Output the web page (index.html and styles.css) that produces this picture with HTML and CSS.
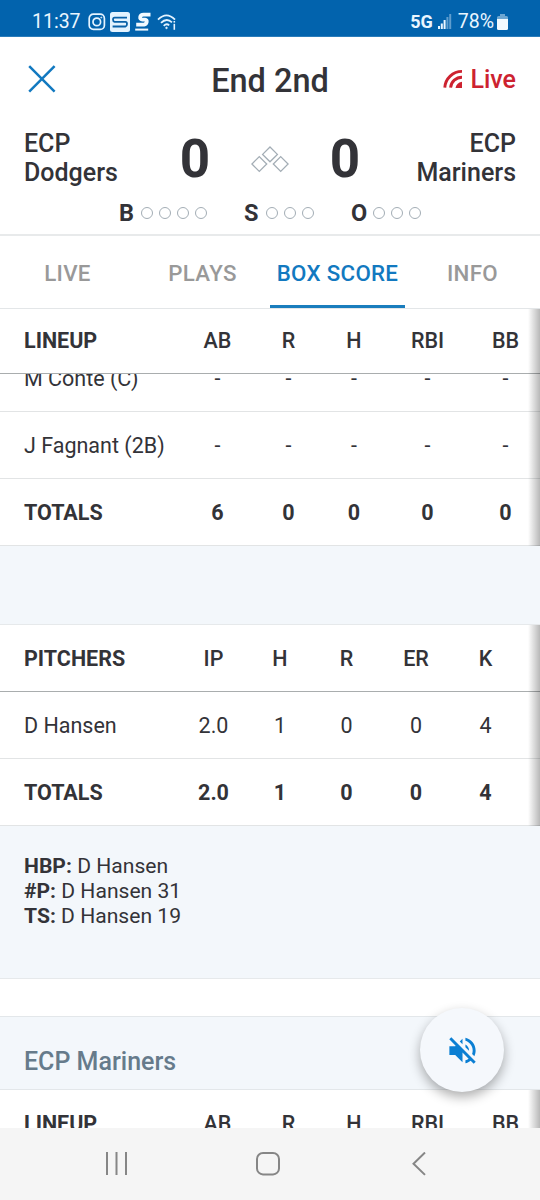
FILE: index.html
```html
<!DOCTYPE html>
<html lang="en">
<head>
    <meta charset="UTF-8">
    <meta name="viewport" content="width=device-width, initial-scale=1.0">
    <title>Box Score</title>
    <link rel="stylesheet" href="styles.css">
</head>
<body>
    <div class="status-bar">
        <span class="time">11:37</span>
        <svg class="app-icon" width="18" height="18" viewBox="0 0 18 18" fill="none" stroke="#e4f3ff" stroke-width="1.7">
            <rect x="1.2" y="1.2" width="15.2" height="15.2" rx="4.2"/>
            <circle cx="8.8" cy="8.9" r="3.8"/>
            <circle cx="13.3" cy="4.5" r=".6" fill="#e4f3ff" stroke-width=".6"/>
        </svg>
        <svg class="app-icon" width="20" height="20" viewBox="0 0 20 20">
            <rect width="20" height="20" rx="2.5" fill="#e4f3ff"/>
            <path d="M17 5.6H4.6Q3 5.6 3 7.6T4.6 9.8H15.4Q17 9.8 17 12T15.4 14.5H2.6" fill="none" stroke="#0a61a8" stroke-width="1.8"/>
        </svg>
        <svg class="app-icon" width="18" height="19" viewBox="0 0 18 19" fill="none" stroke="#f2faff">
            <path d="M16.5 2.6H9.6Q6.6 2.6 6.2 5T8.5 7.6H11Q13.2 7.8 12.7 10T10 12.6H2.2" stroke-width="3.8"/>
            <path d="M1.2 17.6H14.2" stroke-width="2"/>
        </svg>
        <svg class="app-icon" width="20" height="18" viewBox="0 0 20 18" fill="none" stroke="#e4f3ff" stroke-width="1.8">
            <path d="M1 6.6Q9.5-2 18 6.6M4 9.9Q9.5 4.3 15 9.3M6.7 12.9Q9.5 10 12.2 12.4"/>
            <circle cx="9.5" cy="14.9" r=".8" fill="#e4f3ff" stroke-width=".8"/>
            <path d="M17.3 10.8V16.8" stroke-width="1.6"/>
            <path d="M17.3 8V9.6" stroke-width="1.6"/>
        </svg>
        <span class="network">5G</span>
        <svg class="signal" width="14" height="15" viewBox="0 0 14 15" fill="#eaf6ff">
            <rect x="0" y="12" width="2" height="3"/>
            <rect x="2.8" y="9.5" width="2" height="5.5"/>
            <rect x="5.6" y="6" width="2" height="9"/>
            <rect x="8.4" y="3" width="2" height="12" opacity=".4"/>
            <rect x="11.2" y="0" width="2" height="15" opacity=".4"/>
        </svg>
        <span class="battery-level">78%</span>
        <svg class="battery" width="11" height="16" viewBox="0 0 11 16" fill="#f2faff">
            <path d="M3 0H8V2H9.5Q11 2 11 3.5V5H0V3.5Q0 2 1.5 2H3Z" opacity=".45"/>
            <path d="M0 5H11V14.5Q11 16 9.5 16H1.5Q0 16 0 14.5Z"/>
        </svg>
    </div>

    <header class="top-bar">
        <svg class="close" width="28" height="28" viewBox="0 0 28 28" stroke="#1279c0" stroke-width="2.5">
            <path d="M1.2 1.2L26.6 26.6M26.6 1.2L1.2 26.6"/>
        </svg>
        <h1>End 2nd</h1>
        <div class="live">
            <svg width="20" height="20" viewBox="0 0 20 20" fill="none" stroke="#cd2230" stroke-width="2.9">
                <path d="M1.8 18.6A17.2 17.2 0 0 1 19 2.4M7.6 18.6A11.4 11.4 0 0 1 19 8.2"/>
                <path d="M12.5 19Q13.2 14 19 12.8V19Z" fill="#cd2230" stroke="none"/>
            </svg>
            <span>Live</span>
        </div>
    </header>

    <section class="scoreboard">
        <div class="teams">
            <div class="team">ECP<br>Dodgers</div>
            <div class="score">0</div>
            <svg class="bases" width="38" height="28" viewBox="0 0 38 28" fill="none" stroke="#a3adb5" stroke-width="1.3">
                <path d="M19 1L26.4 8.4L19 15.8L11.6 8.4Z"/>
                <path d="M8.3 10.6L15.7 18L8.3 25.4L.9 18Z"/>
                <path d="M29.7 10.6L37.1 18L29.7 25.4L22.3 18Z"/>
            </svg>
            <div class="score">0</div>
            <div class="team away">ECP<br>Mariners</div>
        </div>
        <div class="counts">
            <div class="count"><b>B</b><i></i><i></i><i></i><i></i></div>
            <div class="count"><b>S</b><i></i><i></i><i></i></div>
            <div class="count"><b>O</b><i></i><i></i><i></i></div>
        </div>
    </section>

    <nav class="tabs">
        <span>LIVE</span>
        <span>PLAYS</span>
        <span class="active">BOX SCORE</span>
        <span>INFO</span>
    </nav>

    <main>
        <div class="stats lineup">
            <div class="row head"><b>LINEUP</b><span>AB</span><span>R</span><span>H</span><span>RBI</span><span>BB</span></div>
            <div class="scrolled">
                <div class="row"><span>M Conte (C)</span><span>-</span><span>-</span><span>-</span><span>-</span><span>-</span></div>
            </div>
            <div class="row"><span>J Fagnant (2B)</span><span>-</span><span>-</span><span>-</span><span>-</span><span>-</span></div>
            <div class="row totals"><span>TOTALS</span><span>6</span><span>0</span><span>0</span><span>0</span><span>0</span></div>
        </div>

        <div class="spacer"></div>

        <div class="stats pitchers">
            <div class="row head"><b>PITCHERS</b><span>IP</span><span>H</span><span>R</span><span>ER</span><span>K</span></div>
            <div class="row"><span>D Hansen</span><span>2.0</span><span>1</span><span>0</span><span>0</span><span>4</span></div>
            <div class="row totals"><span>TOTALS</span><span>2.0</span><span>1</span><span>0</span><span>0</span><span>4</span></div>
        </div>

        <div class="notes">
            <div><b>HBP:</b> D Hansen</div>
            <div><b>#P:</b> D Hansen 31</div>
            <div><b>TS:</b> D Hansen 19</div>
        </div>

        <h2>ECP Mariners</h2>

        <div class="stats lineup next">
            <div class="row head"><b>LINEUP</b><span>AB</span><span>R</span><span>H</span><span>RBI</span><span>BB</span></div>
        </div>
    </main>

    <button class="mute" aria-label="Unmute">
        <svg width="35" height="35" viewBox="0 0 24 24" fill="#0b7fd3">
            <path d="M4.34 2.93L2.93 4.34 7.29 8.7 7 9H3v6h4l5 5v-6.59l4.18 4.18c-.65.49-1.38.88-2.18 1.11v2.06c1.34-.3 2.57-.92 3.61-1.75l2.05 2.05 1.41-1.41L4.34 2.93zM19 12c0 .82-.15 1.61-.41 2.34l1.53 1.53c.56-1.17.88-2.48.88-3.87 0-4.28-2.99-7.86-7-8.77v2.06c2.89.86 5 3.54 5 6.71zm-7-8l-1.88 1.88L12 7.76zm4.5 8c0-1.77-1.02-3.29-2.5-4.03v1.79l2.48 2.48c.01-.08.02-.16.02-.24z"/>
        </svg>
    </button>

    <footer class="nav-bar">
        <svg width="24" height="24" viewBox="0 0 24 24" stroke="#868686" stroke-width="2">
            <path d="M2 0V23M11.5 0V23M21 0V23"/>
        </svg>
        <svg width="24" height="24" viewBox="0 0 24 24" fill="none" stroke="#868686" stroke-width="2">
            <rect x="1" y="1" width="22" height="21.4" rx="6"/>
        </svg>
        <svg width="24" height="24" viewBox="0 0 24 24" fill="none" stroke="#868686" stroke-width="2">
            <path d="M18 .5L6.5 11.7L18 22.9"/>
        </svg>
    </footer>
</body>
</html>
```
FILE: styles.css
```css
* { box-sizing: border-box; }
body { margin: 0; height: 1200px; display: flex; flex-direction: column; position: relative; overflow: hidden; background: #fff; color: #333338; font-family: Roboto, sans-serif; font-size: 21.5px; }

.status-bar { height: 37px; flex: none; padding: 7px 32px 0 32px; display: flex; align-items: center; background: #0263ad; border-bottom: 1px solid #2a7cba; color: #eaf6ff; font-size: 19.5px; }
.time { width: 48px; margin-right: 8px; }
.app-icon { margin-right: 4px; }
.app-icon:nth-of-type(3) { margin-right: 5px; }
.network { margin-left: auto; font-weight: 700; font-size: 18px; }
.signal { margin: 0 6px 0 5px; }
.battery { margin-left: 3px; }

.top-bar { height: 84px; flex: none; padding: 0 24px 0 28px; display: grid; grid-template-columns: 1fr auto 1fr; align-items: center; }
h1 { margin: 3px 4px 0 0; font-size: 32.5px; font-weight: 500; line-height: 38px; }
.live { display: flex; justify-content: flex-end; align-items: center; gap: 7px; color: #cd2230; font-size: 25px; font-weight: 500; }

.scoreboard { height: 115px; flex: none; border-bottom: 2px solid #e8eaeb; }
.teams { height: 74px; padding: 0 24px; display: flex; align-items: center; }
.team { width: 132px; margin-top: -1px; font-size: 25px; font-weight: 500; line-height: 29px; }
.away { text-align: right; }
.score { width: 78px; margin-top: 1px; text-align: center; font-size: 53px; font-weight: 700; }
.bases { margin: 4px 17px 0; }
.counts { padding: 4px 0 0 119px; display: flex; }
.count { display: flex; align-items: center; height: 28px; margin-right: 31px; }
.count b { width: 17px; margin-right: 5px; font-size: 23.5px; }
.count i { width: 12px; height: 12px; margin-right: 6px; border: 1.5px solid #a3adb5; border-radius: 50%; }

.tabs { height: 73px; flex: none; display: grid; grid-template-columns: repeat(4, 135px); border-bottom: 1px solid #e3e6e8; color: #999; font-size: 22.3px; font-weight: 500; letter-spacing: .3px; }
.tabs span { display: flex; align-items: center; justify-content: center; padding-top: 5px; border-bottom: 3px solid transparent; }
.tabs .active { color: #1279c0; border-color: #1a7dbd; }

main { flex: 1; min-height: 0; overflow: hidden; }
.stats { position: relative; }
/* shadow hinting at more columns to the right */
.stats::after { content: ""; position: absolute; top: 0; right: 0; bottom: 0; width: 12px; background: linear-gradient(to right, transparent, rgba(0, 0, 0, .28)); }
.row { display: grid; align-items: center; height: 67px; padding: 1px 0 0 24px; border-bottom: 1.5px solid #e2e4e5; }
.row > :not(:first-child) { text-align: center; }
.lineup .row { grid-template-columns: 158px 71px 71px 60px 87px 69px; }
.pitchers .row { grid-template-columns: 156px 67px 66px 67px 72px 67px; }
.head { font-weight: 500; border-bottom-color: #a9adae; }
.lineup .head { height: 65px; padding: 0 0 2px 24px; }
.lineup.next .head { height: 67px; padding-bottom: 0; }
.totals { font-weight: 700; }
.scrolled { height: 38px; overflow: hidden; display: flex; flex-direction: column; justify-content: flex-end; }
.scrolled .row { flex: none; }

.spacer { height: 79px; background: #f3f7fb; border: solid #e6e9eb; border-width: 0 0 1px; }
.notes { height: 153px; padding: 27px 24px 0; background: #f3f7fb; border-bottom: 1px solid #e6e9eb; font-size: 21.1px; line-height: 25px; }
h2 { margin: 37px 0 0; height: 74px; padding: 18px 24px 0; background: #f3f7fb; border: solid #e3e7ea; border-width: 1px 0; color: #667b8b; font-size: 25px; font-weight: 500; line-height: 54px; }

.mute { position: absolute; left: 420px; top: 1008px; width: 84px; height: 84px; padding: 0; display: flex; align-items: center; justify-content: center; border: 0; border-radius: 50%; background: #f5f8fc; box-shadow: 0 5px 12px rgba(0, 0, 0, .32); }

.nav-bar { height: 72px; flex: none; z-index: 1; display: flex; justify-content: space-between; padding: 24px 109px 0 105px; background: #f5f5f5; }
```
